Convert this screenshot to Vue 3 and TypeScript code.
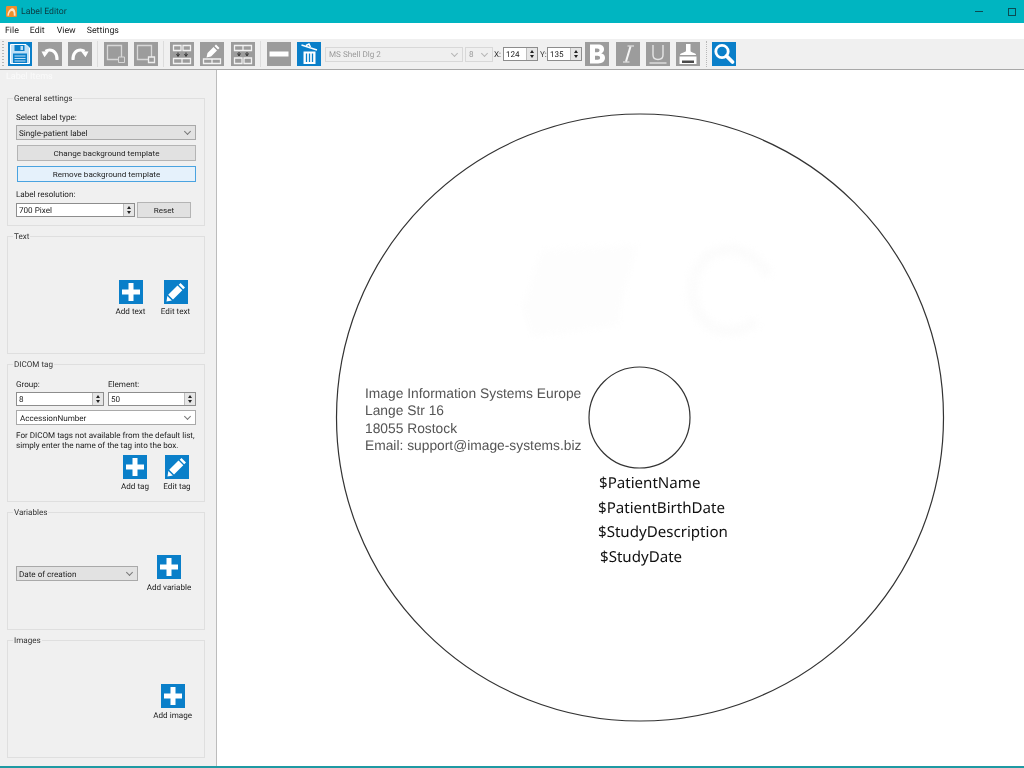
<template>
  <div class="window">
    <svg width="0" height="0" class="defs">
      <symbol id="plus" viewBox="0 0 24 24">
        <rect width="24" height="24" fill="#0a7fc9" />
        <path d="M9.500 3h5v6.500H21v5h-6.500V21h-5v-6.500H3v-5h6.500z" fill="#fff" />
      </symbol>
      <symbol id="pencil" viewBox="0 0 24 24">
        <rect width="24" height="24" fill="#0a7fc9" />
        <path d="M16.500 3l4.500 4.500-1.800 1.800-4.500-4.500zM13.500 5.500l4.800 4.800L9 19.600l-4.800-4.800zM3.300 16l4.600 4.600-5.400 1z" fill="#fff" />
      </symbol>
      <symbol id="merge" viewBox="0 0 24 24">
        <rect width="24" height="24" fill="#9c9c9c" />
        <path d="M3.500 3.500h7.500v5H3.500zM13 3.500h7.500v5H13z" fill="none" stroke="#f2f2f2" stroke-width="1.300" />
        <path d="M8 10.500v3M16 10.500v3M6.500 12L8 14.500 9.500 12M14.500 12l1.500 2.500 1.500-2.500" fill="none" stroke="#333" stroke-width="1" />
        <path d="M3.500 16.500h17v5h-17zM12 16.500v5" fill="none" stroke="#f2f2f2" stroke-width="1.300" />
      </symbol>
      <symbol id="split" viewBox="0 0 24 24">
        <rect width="24" height="24" fill="#9c9c9c" />
        <path d="M3.500 3.500h17v5h-17zM12 3.500v5" fill="none" stroke="#f2f2f2" stroke-width="1.300" />
        <path d="M8 10v3M16 10v3M6.500 11.500L8 14l1.500-2.500M14.500 11.500L16 14l1.500-2.500" fill="none" stroke="#333" stroke-width="1" />
        <path d="M3.500 16H11v5.500H3.500zM13 16h7.500v5.500H13z" fill="none" stroke="#f2f2f2" stroke-width="1.300" />
      </symbol>
    </svg>

    <header class="titlebar">
      <svg class="app-icon" viewBox="0 0 12 12">
        <rect width="12" height="12" rx="1.500" fill="#ee8f2c" />
        <path d="M1.500 10.500C2 5 5 2.500 7 2.500s3.500 2.500 3.500 8H8.500C8.500 7 8 5.500 6.500 5.500S3.500 7 3 10.500z" fill="#fbe6c8" />
      </svg>
      <span class="title">Label Editor</span>
      <span class="win-min"></span>
      <span class="win-max"></span>
    </header>

    <nav class="menubar">
      <span v-for="item in menu" :key="item.label" class="menu-item" :class="item.cls">{{ item.label }}</span>
    </nav>

    <div class="toolbar">
      <span class="grip"></span>
      <svg class="tool" viewBox="0 0 24 24">
        <rect width="24" height="24" fill="#0a7fc9" />
        <path d="M2.500 2.500h15.500l3.500 3.500v15.500H2.500z" fill="#bfe0f6" stroke="#fff" />
        <rect x="6.500" y="3" width="10" height="6" fill="#0a7fc9" />
        <rect x="12.500" y="4" width="2.500" height="4" fill="#bfe0f6" />
        <rect x="5" y="11.500" width="14" height="9.500" fill="#0a7fc9" />
        <path d="M6.500 14h11M6.500 16.500h11M6.500 19h11" stroke="#bfe0f6" />
      </svg>
      <svg class="tool t6" viewBox="0 0 24 24">
        <rect width="24" height="24" fill="#9c9c9c" />
        <path d="M19 18c.5-6-3-10-7.500-10-1.500 0-2.800.5-4 1.300" fill="none" stroke="#fff" stroke-width="3" />
        <path d="M3.500 9.500l7.500-.3-4.500 6z" fill="#fff" />
      </svg>
      <svg class="tool t6" viewBox="0 0 24 24">
        <rect width="24" height="24" fill="#9c9c9c" />
        <path d="M5 18c-.5-6 3-10 7.500-10 1.500 0 2.800.5 4 1.300" fill="none" stroke="#fff" stroke-width="3" />
        <path d="M20.500 9.500l-7.500-.3 4.500 6z" fill="#fff" />
      </svg>
      <span class="sep"></span>
      <svg class="tool" viewBox="0 0 24 24">
        <rect width="24" height="24" fill="#9c9c9c" />
        <path d="M3.500 3.500h14v14h-14z" fill="none" stroke="#d8d8d8" stroke-width="1.300" />
        <path d="M14.500 15h6v5.500h-6z" fill="#9c9c9c" stroke="#d8d8d8" />
      </svg>
      <svg class="tool t6" viewBox="0 0 24 24">
        <rect width="24" height="24" fill="#9c9c9c" />
        <path d="M3.500 3.500h14v14h-14z" fill="none" stroke="#d8d8d8" stroke-width="1.300" />
        <path d="M14.500 15h6v5.500h-6z" fill="#9c9c9c" stroke="#eee" stroke-width="1.300" />
      </svg>
      <span class="sep"></span>
      <svg class="tool"><use href="#merge" /></svg>
      <svg class="tool t6" viewBox="0 0 24 24">
        <rect width="24" height="24" fill="#9c9c9c" />
        <path d="M16 2.500l3.500 3.500-1.500 1.500L14.500 4zM13.500 5l3.500 3.500-6 6-4.500 1 1-4.500z" fill="#fff" />
        <path d="M3.500 17h17v4.500h-17zM12 17v4.500" fill="none" stroke="#f2f2f2" stroke-width="1.300" />
      </svg>
      <svg class="tool t7"><use href="#split" /></svg>
      <span class="sep"></span>
      <svg class="tool" viewBox="0 0 24 24">
        <rect width="24" height="24" fill="#9c9c9c" />
        <rect x="2.500" y="9.500" width="19" height="5" fill="#fff" />
      </svg>
      <svg class="tool t6" viewBox="0 0 24 24">
        <rect width="24" height="24" fill="#0a7fc9" />
        <path d="M4.500 3l15.500 5M9 3.500l3-1.500 1.500 3" fill="none" stroke="#fff" stroke-width="1.400" />
        <path d="M6.500 9.500h12V22h-12z" fill="#fff" />
        <path d="M9.500 11.500v8.500M12.500 11.500v8.500M15.500 11.500v8.500" stroke="#0a7fc9" stroke-width="1.300" />
      </svg>
      <div class="tb-combo font"><span>MS Shell Dlg 2</span><i class="chev"></i></div>
      <div class="tb-combo size"><span>8</span><i class="chev"></i></div>
      <span class="coord">X:</span>
      <div class="spin tb-spin"><span class="val">124</span><span class="arrows"><b></b><b></b></span></div>
      <span class="coord">Y:</span>
      <div class="spin tb-spin"><span class="val">135</span><span class="arrows"><b></b><b></b></span></div>
      <svg class="tool b-tool" viewBox="0 0 24 24">
        <rect width="24" height="24" fill="#9c9c9c" />
        <path d="M5 2.500h8c4 0 6 2 6 4.800 0 2-1 3.400-2.800 4 2.500.6 3.800 2.200 3.800 4.500 0 3.500-2.500 5.700-6.800 5.700H5zM10 6.400v3.800h2.300c1.500 0 2.200-.7 2.200-1.900s-.7-1.900-2.200-1.900zM10 13.800v4h2.700c1.600 0 2.400-.7 2.400-2s-.8-2-2.400-2z" fill="#fff" fill-rule="evenodd" />
      </svg>
      <svg class="tool t7" viewBox="0 0 24 24">
        <rect width="24" height="24" fill="#9c9c9c" />
        <path d="M14.500 4.500L10 19.500" stroke="#f4f4f4" stroke-width="2" />
        <path d="M11.500 4h6.500M7 20h6.500" stroke="#f4f4f4" stroke-width="1" />
      </svg>
      <svg class="tool t6" viewBox="0 0 24 24">
        <rect width="24" height="24" fill="#9c9c9c" />
        <path d="M7 3v10c0 3 2 4.500 5 4.500s5-1.500 5-4.500V3" fill="none" stroke="#e6e6e6" stroke-width="1.400" />
        <path d="M3.500 21h17" stroke="#e6e6e6" stroke-width="1.300" />
      </svg>
      <svg class="tool t6" viewBox="0 0 24 24">
        <rect width="24" height="24" fill="#9c9c9c" />
        <path d="M10 2h4.500v6.500c0 1 .5 1.500 2 2 2 .5 3.500 1 3.500 2.500H4c0-1.500 1.500-2 3.500-2.500 1.500-.5 2.500-1 2.500-2z" fill="#fff" />
        <path d="M3.500 14.500h17V22H3.500z" fill="#fff" />
        <path d="M6 18.500h12v2.500H6z" fill="#4a4a4a" />
      </svg>
      <span class="sep last"></span>
      <svg class="tool" viewBox="0 0 24 24">
        <rect width="24" height="24" fill="#0a7fc9" />
        <circle cx="10" cy="9.500" r="6.200" fill="#0a7fc9" stroke="#fff" stroke-width="2.800" />
        <path d="M14.500 14l6 6" stroke="#fff" stroke-width="3.800" stroke-linecap="round" />
      </svg>
    </div>

    <main class="body">
      <aside class="sidebar">
        <div class="dock-title">Label Items</div>

        <section class="group general">
          <div class="legend">General settings</div>
          <div class="cap">Select label type:</div>
          <div class="combo grey"><span>Single-patient label</span><i class="chev"></i></div>
          <button class="btn wide">Change background template</button>
          <button class="btn wide focus">Remove background template</button>
          <div class="cap res">Label resolution:</div>
          <div class="res-row">
            <div class="spin res-spin"><span class="val">700 Pixel</span><span class="arrows"><b></b><b></b></span></div>
            <button class="btn reset">Reset</button>
          </div>
        </section>

        <section class="group text-group">
          <div class="legend">Text</div>
          <div class="icons text-icons">
            <div class="icon-btn"><svg class="ico"><use href="#plus" /></svg><span>Add text</span></div>
            <div class="icon-btn"><svg class="ico"><use href="#pencil" /></svg><span>Edit text</span></div>
          </div>
        </section>

        <section class="group dicom">
          <div class="legend">DICOM tag</div>
          <div class="two-col caps">
            <span>Group:</span>
            <span>Element:</span>
          </div>
          <div class="two-col">
            <div class="spin"><span class="val">8</span><span class="arrows"><b></b><b></b></span></div>
            <div class="spin"><span class="val">50</span><span class="arrows"><b></b><b></b></span></div>
          </div>
          <div class="combo white"><span>AccessionNumber</span><i class="chev"></i></div>
          <p class="help">For DICOM tags not available from the default list,<br />simply enter the name of the tag into the box.</p>
          <div class="icons dicom-icons">
            <div class="icon-btn"><svg class="ico"><use href="#plus" /></svg><span>Add tag</span></div>
            <div class="icon-btn"><svg class="ico"><use href="#pencil" /></svg><span>Edit tag</span></div>
          </div>
        </section>

        <section class="group vars">
          <div class="legend">Variables</div>
          <div class="var-row">
            <div class="combo grey var-combo"><span>Date of creation</span><i class="chev"></i></div>
            <div class="icon-btn var-btn"><svg class="ico"><use href="#plus" /></svg><span>Add variable</span></div>
          </div>
        </section>

        <section class="group images">
          <div class="legend">Images</div>
          <div class="icons image-icons">
            <div class="icon-btn"><svg class="ico"><use href="#plus" /></svg><span>Add image</span></div>
          </div>
        </section>
      </aside>

      <div class="canvas">
        <svg class="disc" width="807" height="696" viewBox="0 0 807 696">
          <g class="watermark">
            <path d="M325 180l95-5-12 45-8 35-85 12-10-30z" fill="#fdfdfd" />
            <path d="M552 205c-12-18-30-30-50-24-28 9-33 45-18 66 14 18 38 18 55 4" fill="none" stroke="#fcfcfc" stroke-width="11" />
          </g>
          <circle cx="423" cy="347.500" r="303.500" fill="none" stroke="#333" stroke-width="1.200" />
          <circle cx="422.500" cy="347.500" r="50.500" fill="none" stroke="#333" stroke-width="1.200" />
        </svg>
        <div class="address">
          <div v-for="line in address" :key="line">{{ line }}</div>
        </div>
        <div
          v-for="tag in tags"
          :key="tag.text"
          class="tag"
          :style="{ left: tag.x + 'px', top: tag.y + 'px' }"
        >{{ tag.text }}</div>
      </div>
    </main>
  </div>
</template>

<script setup lang="ts">
interface MenuItem {
  label: string
  cls: string
}

interface DiscTag {
  text: string
  x: number
  y: number
}

const menu: MenuItem[] = [
  { label: 'File', cls: 'm-file' },
  { label: 'Edit', cls: 'm-edit' },
  { label: 'View', cls: 'm-view' },
  { label: 'Settings', cls: 'm-settings' }
]

const address: string[] = [
  'Image Information Systems Europe',
  'Lange Str 16',
  '18055 Rostock',
  'Email: support@image-systems.biz'
]

// coordinates are relative to the canvas, the tags sit freely on the disc
const tags: DiscTag[] = [
  { text: '$PatientName', x: 382, y: 402 },
  { text: '$PatientBirthDate', x: 381, y: 427 },
  { text: '$StudyDescription', x: 381, y: 451 },
  { text: '$StudyDate', x: 383, y: 476 }
]
</script>

<style>
html,
body {
  margin: 0;
  background: #f0f0f0;
}
</style>

<style scoped>
.window {
  width: 1024px;
  height: 768px;
  overflow: hidden;
  display: flex;
  flex-direction: column;
  background: #f0f0f0;
  color: #222;
  font-family: Roboto, "Liberation Sans", sans-serif;
  font-size: 8.100px;
  text-rendering: geometricPrecision;
  filter: blur(0.45px);
}

.defs {
  position: absolute;
}

.titlebar {
  height: 23px;
  flex: none;
  display: flex;
  align-items: center;
  background: #00b5c1;
  padding-left: 6px;
}

.app-icon {
  width: 11px;
  height: 11px;
}

.title {
  margin-left: 4px;
  font-size: 8.700px;
  color: #0b3a40;
}

.win-min {
  margin-left: auto;
  width: 8px;
  height: 1px;
  background: #0b4b52;
}

.win-max {
  margin-left: 25px;
  margin-right: 8px;
  width: 6px;
  height: 6px;
  border: 1px solid #0b4b52;
}

.menubar {
  height: 16px;
  flex: none;
  display: flex;
  align-items: center;
  background: #fff;
  font-size: 8.800px;
}

.m-file {
  margin-left: 5px;
}

.m-edit {
  margin-left: 11px;
}

.m-view {
  margin-left: 12px;
}

.m-settings {
  margin-left: 11px;
}

.toolbar {
  height: 30px;
  flex: none;
  display: flex;
  align-items: center;
  background: #f0f0f0;
  border-bottom: 1px solid #a8a8a8;
  padding-left: 2px;
}

.grip {
  width: 2px;
  height: 26px;
  margin-right: 4px;
  background: repeating-linear-gradient(#b8b8b8 0 1px, transparent 1px 3px);
}

.tool {
  width: 24px;
  height: 24px;
  flex: none;
}

.t6 {
  margin-left: 6px;
}

.t7 {
  margin-left: 7px;
}

.sep {
  width: 1px;
  height: 26px;
  margin: 0 6px 0 5px;
  background: #dcdcdc;
}

.sep.last {
  width: 0;
  margin: 0 5px 0 6px;
  background: none;
  border-left: 1px dotted #b8b8b8;
}

.tb-combo {
  height: 15px;
  display: flex;
  align-items: center;
  box-sizing: border-box;
  border: 1px solid #d8d8d8;
  background: #efefef;
  color: #9a9a9a;
  padding-left: 3px;
}

.tb-combo.font {
  width: 138px;
  margin-left: 4px;
}

.tb-combo.size {
  width: 28px;
  margin-left: 2px;
}

.chev {
  margin-left: auto;
  margin-right: 5px;
  width: 4px;
  height: 4px;
  margin-top: -2px;
  border-right: 1px solid #777;
  border-bottom: 1px solid #777;
  transform: rotate(45deg);
}

.tb-combo .chev {
  border-color: #b5b5b5;
}

.coord {
  margin-left: 1px;
  width: 9px;
  flex: none;
  color: #333;
}

.spin {
  height: 14px;
  box-sizing: border-box;
  display: flex;
  align-items: stretch;
  border: 1px solid #8d8d8d;
  background: #fff;
}

.val {
  flex: 1;
  padding-left: 2px;
  line-height: 12px;
  color: #222;
}

.arrows {
  width: 10px;
  display: flex;
  flex-direction: column;
  justify-content: center;
  align-items: center;
  gap: 2px;
  background: #e6e6e6;
  border-left: 1px solid #bdbdbd;
}

.arrows b {
  width: 0;
  height: 0;
  border-left: 2.500px solid transparent;
  border-right: 2.500px solid transparent;
  border-bottom: 3px solid #222;
}

.arrows b + b {
  border-bottom: 0;
  border-top: 3px solid #222;
}

.tb-spin {
  width: 35px;
  flex: none;
}

.tb-spin + .coord {
  margin-left: 2px;
  width: 7px;
}

.b-tool {
  margin-left: 3px;
}

.body {
  flex: 1;
  display: flex;
  min-height: 0;
  border-bottom: 2px solid #1f9aa3;
}

.sidebar {
  width: 217px;
  flex: none;
  box-sizing: border-box;
  border-right: 1px solid #bcbcbc;
  display: flex;
  flex-direction: column;
  gap: 10px;
  padding-left: 7px;
}

.dock-title {
  height: 19px;
  margin-left: -1px;
  margin-bottom: -1px;
  line-height: 15px;
  color: #fafafa;
  font-size: 9px;
}

.group {
  width: 198px;
  box-sizing: border-box;
  border: 1px solid #dfdfdf;
  padding: 0 8px;
  flex: none;
}

.legend {
  width: fit-content;
  height: 9px;
  margin: -5px 0 0 -3px;
  padding: 0 1px;
  line-height: 9px;
  background: #f0f0f0;
  color: #333;
}

.general {
  height: 128px;
}

.cap {
  margin-top: 9px;
  height: 10px;
  line-height: 10px;
}

.combo {
  height: 15px;
  box-sizing: border-box;
  margin-top: 3px;
  display: flex;
  align-items: center;
  padding-left: 2px;
  border: 1px solid #a9a9a9;
}

.combo.grey {
  background: #e2e2e2;
}

.combo.white {
  background: #fff;
  margin-top: 4px;
  padding-left: 3px;
}

.btn {
  display: block;
  box-sizing: border-box;
  border: 1px solid #b4b4b4;
  background: #e1e1e1;
  color: #222;
  font: inherit;
  padding: 0;
}

.wide {
  width: 179px;
  height: 16px;
  margin: 5px 0 0 1px;
}

.focus {
  background: #e5f1fb;
  border-color: #4aa3e0;
}

.cap.res {
  margin-top: 7px;
}

.res-row {
  display: flex;
  align-items: center;
  gap: 2px;
  margin-top: 3px;
}

.res-spin {
  width: 119px;
}

.reset {
  width: 54px;
  height: 16px;
}

.text-group {
  height: 118px;
}

.icons {
  display: flex;
  justify-content: flex-end;
}

.icon-btn {
  display: flex;
  flex-direction: column;
  align-items: center;
  white-space: nowrap;
  line-height: 10px;
  gap: 2px;
}

.ico {
  width: 24px;
  height: 24px;
  display: block;
}

.text-icons {
  margin-top: 39px;
  margin-right: -2px;
}

.text-icons .icon-btn {
  width: 45px;
}

.dicom {
  height: 138px;
}

.two-col {
  display: grid;
  grid-template-columns: 88px 88px;
  gap: 4px;
}

.caps {
  margin-top: 10px;
  height: 13px;
  line-height: 10px;
}

.dicom .combo {
  width: 180px;
}

.help {
  margin: 5px 0 0;
  line-height: 10px;
  white-space: nowrap;
}

.dicom-icons {
  margin-top: 5px;
  margin-right: -2px;
}

.dicom-icons .icon-btn {
  width: 42px;
}

.vars {
  height: 118px;
}

.var-row {
  display: flex;
  align-items: flex-start;
  margin-top: 38px;
}

.var-combo {
  width: 122px;
  margin-top: 11px;
}

.var-btn {
  width: 50px;
  margin-left: 6px;
  gap: 3px;
}

.images {
  height: 118px;
}

.image-icons {
  margin-top: 39px;
  margin-right: 4px;
}

.canvas {
  flex: 1;
  position: relative;
  background: #fff;
}

.disc {
  display: block;
}

.watermark {
  filter: blur(3px);
}

.address {
  position: absolute;
  left: 148px;
  top: 315px;
  font-family: "Liberation Sans", Arial, sans-serif;
  font-size: 13.800px;
  line-height: 17.300px;
  color: #555;
  white-space: nowrap;
}

.tag {
  position: absolute;
  font-family: "Noto Sans", sans-serif;
  font-size: 15.100px;
  line-height: 22px;
  color: #111;
  white-space: nowrap;
}
</style>
